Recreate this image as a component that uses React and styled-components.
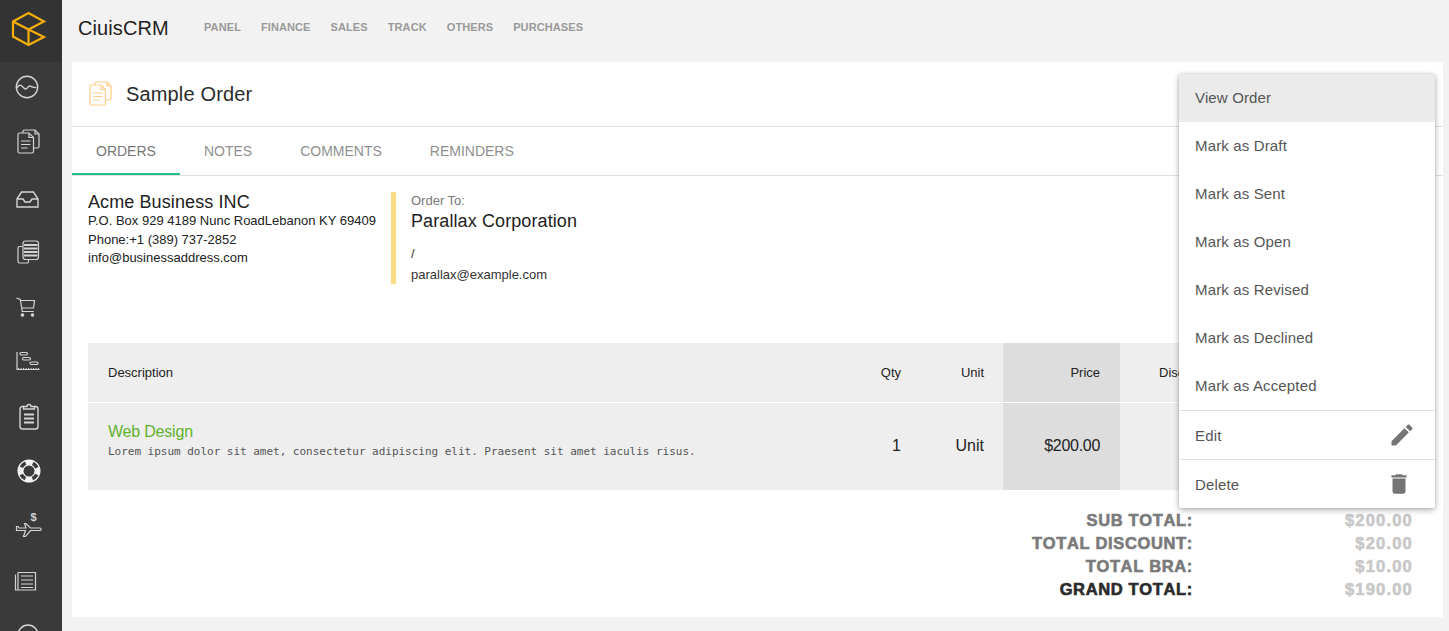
import React from "react";
import styled, { createGlobalStyle } from "styled-components";

const GlobalStyle = createGlobalStyle`
  html, body {
    margin: 0;
    padding: 0;
    background: #f2f2f2;
    font-family: "Liberation Sans", Arial, sans-serif;
    overflow: hidden;
  }
`;

const Shell = styled.div`
  display: flex;
  width: 100%;
  height: 631px;
  overflow: hidden;
`;

const Sidebar = styled.aside`
  flex: 0 0 62px;
  background: #3a3a3a;
  overflow: hidden;
`;

const Logo = styled.div`
  height: 62px;
  background: #333333;
  svg {
    display: block;
  }
`;

const SideItem = styled.div`
  height: 54.8px;
  display: flex;
  align-items: center;
  justify-content: center;
  padding-right: 7px;
  &:nth-child(2) {
    margin-top: -2px;
  }
`;

const Main = styled.main`
  flex: 1;
  min-width: 0;
  display: flex;
  flex-direction: column;
  padding: 0 6px 14px 10px;
`;

const TopBar = styled.header`
  height: 62px;
  flex: 0 0 62px;
  display: flex;
  align-items: center;
  padding: 0 0 8px 6px;
  box-sizing: border-box;
`;

const Brand = styled.div`
  font-size: 20px;
  letter-spacing: 0.1px;
  color: #222;
  width: 126px;
  margin-top: 3px;
`;

const TopNav = styled.nav`
  display: flex;
  gap: 20px;
`;

const TopLink = styled.a`
  font-size: 11px;
  font-weight: 700;
  letter-spacing: 0.1px;
  color: #999;
`;

const Card = styled.section`
  position: relative;
  flex: 1;
  background: #fff;
`;

const TitleRow = styled.div`
  height: 64px;
  display: flex;
  align-items: center;
  gap: 11px;
  padding-left: 13px;
  border-bottom: 1px solid #e0e0e0;
`;

const Title = styled.h1`
  margin: 0;
  font-size: 20px;
  font-weight: 400;
  letter-spacing: 0.15px;
  color: #2b2b2b;
`;

const Tabs = styled.div`
  display: flex;
  height: 48px;
  border-bottom: 1px solid #e0e0e0;
`;

const Tab = styled.div`
  padding: 0 24px;
  display: flex;
  align-items: center;
  font-size: 14px;
  color: ${(props) => (props.$active ? "#777" : "#8f8f8f")};
  box-shadow: ${(props) => (props.$active ? "inset 0 -2px 0 #26bf86" : "none")};
`;

const Info = styled.div`
  display: flex;
  padding: 16px 16px 0;
  height: 167px;
  box-sizing: border-box;
`;

const Company = styled.div`
  width: 303px;
  padding-top: 1px;
  font-size: 13px;
  color: #222;
`;

const CompanyName = styled.div`
  font-size: 18px;
  line-height: 19px;
  letter-spacing: 0.1px;
  color: #222;
`;

const CompanyLine = styled.div`
  line-height: 18.5px;
`;

const Customer = styled.div`
  width: 300px;
  height: 92px;
  box-sizing: border-box;
  border-left: 5px solid #fddb85;
  padding-left: 15px;
  font-size: 13px;
  color: #333;
`;

const OrderLabel = styled.div`
  color: #777;
  line-height: 18px;
`;

const CustomerName = styled.div`
  font-size: 18px;
  line-height: 23px;
  letter-spacing: 0.1px;
  color: #222;
  margin-bottom: 10px;
`;

const CustomerLine = styled.div`
  line-height: 21px;
`;

const Table = styled.div`
  margin: 0 16px;
  background: #eeeeee;
`;

const Row = styled.div`
  display: grid;
  grid-template-columns: 1fr 70px 83px 117px 307px;
  height: ${(props) => (props.$head ? "59px" : "87px")};
  border-bottom: ${(props) => (props.$head ? "1px solid #fff" : "none")};
`;

const Cell = styled.div`
  display: flex;
  align-items: center;
  justify-content: ${(props) => (props.$left ? "flex-start" : "flex-end")};
  padding: ${(props) => (props.$pad ? props.$pad : "0 19px")};
  font-size: 13px;
  color: #222;
  background: ${(props) => (props.$shade ? "#dddddd" : "transparent")};
`;

const ValueCell = styled(Cell)`
  padding-bottom: 2px;
  font-size: 16px;
  letter-spacing: ${(props) => props.$tight || 0}px;
`;

const ItemCell = styled.div`
  padding: 19px 20px 0;
`;

const ItemName = styled.div`
  font-size: 16px;
  line-height: 20px;
  letter-spacing: -0.2px;
  color: #5fb22c;
`;

const ItemDesc = styled.div`
  font-family: "DejaVu Sans Mono", "Liberation Mono", monospace;
  font-size: 11px;
  line-height: 18px;
  margin-top: 1px;
  letter-spacing: -0.02px;
  color: #555;
`;

const Totals = styled.div`
  display: grid;
  grid-template-columns: 1fr 220px;
  margin-top: 19px;
  padding-right: 30px;
`;

const TotalLabel = styled.div`
  text-align: right;
  font-size: 16.5px;
  font-weight: 700;
  font-kerning: none;
  line-height: 23px;
  letter-spacing: 0.65px;
  -webkit-text-stroke: 0.6px currentColor;
  color: ${(props) => (props.$strong ? "#2b2b2b" : "#7a7a7a")};
`;

const TotalValue = styled(TotalLabel)`
  letter-spacing: 1.2px;
  color: #c8c8c8;
`;

const Menu = styled.div`
  position: absolute;
  left: 1107px;
  top: 12px;
  width: 256px;
  background: #fff;
  border-radius: 2px;
  box-shadow: 0 2px 6px rgba(0, 0, 0, 0.3), 0 0 3px rgba(0, 0, 0, 0.12);
`;

const MenuItem = styled.div`
  height: 48px;
  box-sizing: ${(props) => (props.$divided ? "content-box" : "border-box")};
  display: flex;
  align-items: center;
  justify-content: space-between;
  padding: 0 ${(props) => props.$right || 16}px ${(props) => (props.$divided ? 0 : 2)}px 16px;
  font-size: 15px;
  letter-spacing: 0.15px;
  color: #555;
  background: ${(props) => (props.$active ? "#ebebeb" : "transparent")};
  border-top: ${(props) => (props.$divided ? "1px solid #e0e0e0" : "none")};
  svg {
    fill: #757575;
    display: block;
  }
`;

const IconLine = ({ size = 30, color = "#d4d4d4", width = 1.2, children }) => (
  <svg width={size} height={size} viewBox="0 0 30 30" fill="none" stroke={color} strokeWidth={width}>
    {children}
  </svg>
);

const DocsIcon = ({ color, width }) => (
  <IconLine color={color} width={width}>
    <path d="M10 6V4.500A1.500 1.500 0 0 1 11.500 3H22l4 4v12.500a1.500 1.500 0 0 1-1.500 1.500H21" />
    <path d="M22 3v4h4" />
    <path d="M6.500 6H16l4.500 4.500V24.500a1.500 1.500 0 0 1-1.500 1.500H6.500A1.500 1.500 0 0 1 5 24.500v-17A1.500 1.500 0 0 1 6.500 6z" />
    <path d="M16 6.500v4h4M8 14h9.500M8 17.500h9.500M8 21h6.500" />
  </IconLine>
);

const navIcons = [
  <IconLine key="pulse" width={1.4}>
    <circle cx="14" cy="15" r="10.700" />
    <path d="M4 16c1.600-2.600 3-3.400 4.600-2.200 1.600 1.200 2.400 3.200 4 3.200 1.800 0 2.200-3 4.200-3 1.600 0 2.400 1.600 6.500 1.600" />
  </IconLine>,
  <DocsIcon key="docs" />,
  <IconLine key="inbox" width={1.4}>
    <path d="M4 17L8.500 10h12l4.500 7v8H4z" />
    <path d="M4 17h6l2 3h5l2-3h6" />
  </IconLine>,
  <IconLine key="stack">
    <path d="M9.500 9.500H6.500A1.500 1.500 0 0 0 5 11v13.500A1.500 1.500 0 0 0 6.500 26h7.500a1.500 1.500 0 0 0 1.500-1.500v-2" />
    <rect x="10" y="4" width="15.500" height="18.500" rx="2.500" />
    <path d="M11 8h13.500M11 11.500h13.500M11 15h13.500M11 18.500h13.500" strokeWidth="2" />
  </IconLine>,
  <IconLine key="cart">
    <path d="M3.500 6l3.800 1.500 2 12h11.500M7 8.500h14.500l-1 7.500H8.500" />
    <circle cx="9.500" cy="23" r="1.200" fill="#d4d4d4" />
    <circle cx="19.500" cy="23" r="1.200" fill="#d4d4d4" />
  </IconLine>,
  <IconLine key="gantt">
    <path d="M4 6v17.500h22.500" />
    <path d="M5 22.500h21" strokeDasharray="1 1.500" />
    <rect x="7" y="6.500" width="7.500" height="2.500" rx="1.200" />
    <rect x="9.500" y="11.500" width="8" height="2.500" rx="1.200" />
    <rect x="17" y="16" width="8" height="2.500" rx="1.200" />
  </IconLine>,
  <IconLine key="clip" width={1.4}>
    <path d="M10.500 5.500H9.500A2.500 2.500 0 0 0 7 8v17.500A2.500 2.500 0 0 0 9.500 28h13a2.500 2.500 0 0 0 2.500-2.500V8a2.500 2.500 0 0 0-2.500-2.500h-1" />
    <path d="M10.500 8V5.500h3.500a2 2 0 0 1 4 0h3.500V8z" />
    <path d="M11 13.500h10M11 17.500h10M11 21.500h10" strokeWidth="1.800" />
  </IconLine>,
  <svg key="buoy" width="30" height="30" viewBox="0 0 30 30">
    <circle cx="16" cy="15" r="8.500" fill="none" stroke="#f2f2f2" strokeWidth="6" />
    <circle cx="16" cy="15" r="8.500" fill="none" stroke="#3a3a3a" strokeWidth="3.600" strokeDasharray="6 7.350" strokeDashoffset="-3.680" />
  </svg>,
  <svg key="plane" width="30" height="30" viewBox="0 0 30 30" fill="none" stroke="#d4d4d4" strokeWidth="1.200">
    <path d="M3.500 15.500v4h9l-2 6h2l5-6h9.500c1.500 0 1.500-2.500 0-2.500H17.500l-4.500-4.500h-1.500l1.500 4.500H6l-.8-1.500z" />
    <text x="17.500" y="10" fontFamily="Liberation Sans, sans-serif" fontSize="11" fontWeight="700" fill="#d4d4d4" stroke="none">$</text>
  </svg>,
  <IconLine key="paper">
    <path d="M5 6.500h17.500V24H2.500V8.500" />
    <path d="M5 6.500V24M8 10h12M8 14h12M8 18h12M8 21.500h12" />
  </IconLine>,
  <IconLine key="more" width={1.5}>
    <circle cx="15" cy="15" r="10" />
  </IconLine>,
];

const topLinks = ["PANEL", "FINANCE", "SALES", "TRACK", "OTHERS", "PURCHASES"];
const tabs = ["ORDERS", "NOTES", "COMMENTS", "REMINDERS"];
const statusItems = ["Mark as Draft", "Mark as Sent", "Mark as Open", "Mark as Revised", "Mark as Declined", "Mark as Accepted"];
const totals = [
  ["SUB TOTAL:", "$200.00"],
  ["TOTAL DISCOUNT:", "$20.00"],
  ["TOTAL BRA:", "$10.00"],
  ["GRAND TOTAL:", "$190.00", true],
];

const App = () => {
  return (
    <Shell>
      <GlobalStyle />
      <Sidebar>
        <Logo>
          <svg width="62" height="62" viewBox="0 0 62 62" fill="none" stroke="#f5ae0a" strokeWidth="2.2">
            <path d="M13 21.500L28.500 13 44 21.500 28.500 29.500 44 37 28.500 45 13 36.500z" />
            <path d="M13 21.500l15.500 8V45" />
          </svg>
        </Logo>
        {navIcons.map((icon) => (
          <SideItem key={icon.key}>{icon}</SideItem>
        ))}
      </Sidebar>
      <Main>
        <TopBar>
          <Brand>CiuisCRM</Brand>
          <TopNav>
            {topLinks.map((link) => (
              <TopLink key={link}>{link}</TopLink>
            ))}
          </TopNav>
        </TopBar>
        <Card>
          <TitleRow>
            <DocsIcon color="#fdcb8a" width={1.2} />
            <Title>Sample Order</Title>
          </TitleRow>
          <Tabs>
            {tabs.map((tab, i) => (
              <Tab key={tab} $active={i === 0}>{tab}</Tab>
            ))}
          </Tabs>
          <Info>
            <Company>
              <CompanyName>Acme Business INC</CompanyName>
              <CompanyLine>P.O. Box 929 4189 Nunc RoadLebanon KY 69409</CompanyLine>
              <CompanyLine>Phone:+1 (389) 737-2852</CompanyLine>
              <CompanyLine>info@businessaddress.com</CompanyLine>
            </Company>
            <Customer>
              <OrderLabel>Order To:</OrderLabel>
              <CustomerName>Parallax Corporation</CustomerName>
              <CustomerLine>/</CustomerLine>
              <CustomerLine>parallax@example.com</CustomerLine>
            </Customer>
          </Info>
          <Table>
            <Row $head>
              <Cell $left $pad="0 20px">Description</Cell>
              <Cell>Qty</Cell>
              <Cell>Unit</Cell>
              <Cell $shade $pad="0 20px">Price</Cell>
              <Cell $left $pad="0 0 0 39px">Discount</Cell>
            </Row>
            <Row>
              <ItemCell>
                <ItemName>Web Design</ItemName>
                <ItemDesc>Lorem ipsum dolor sit amet, consectetur adipiscing elit. Praesent sit amet iaculis risus.</ItemDesc>
              </ItemCell>
              <ValueCell>1</ValueCell>
              <ValueCell>Unit</ValueCell>
              <ValueCell $shade $tight={-0.3} $pad="0 20px">$200.00</ValueCell>
              <Cell />
            </Row>
          </Table>
          <Totals>
            {totals.map(([label, value, strong]) => (
              <React.Fragment key={label}>
                <TotalLabel $strong={strong}>{label}</TotalLabel>
                <TotalValue>{value}</TotalValue>
              </React.Fragment>
            ))}
          </Totals>
          <Menu>
            <MenuItem $active>View Order</MenuItem>
            {statusItems.map((item) => (
              <MenuItem key={item}>{item}</MenuItem>
            ))}
            <MenuItem $divided $right={19}>
              Edit
              <svg width="28" height="28" viewBox="0 0 24 24">
                <path d="M3 17.250V21h3.750L17.810 9.940l-3.750-3.750L3 17.250zM20.710 7.040c.390-.390.390-1.020 0-1.410l-2.340-2.340c-.390-.390-1.020-.390-1.410 0l-1.830 1.830 3.750 3.750 1.830-1.830z" />
              </svg>
            </MenuItem>
            <MenuItem $divided $right={23}>
              Delete
              <svg width="26" height="26" viewBox="0 0 24 24">
                <path d="M6 19c0 1.100.900 2 2 2h8c1.100 0 2-.900 2-2V7H6v12zM19 4h-3.500l-1-1h-5l-1 1H5v2h14V4z" />
              </svg>
            </MenuItem>
          </Menu>
        </Card>
      </Main>
    </Shell>
  );
};

export default App;
